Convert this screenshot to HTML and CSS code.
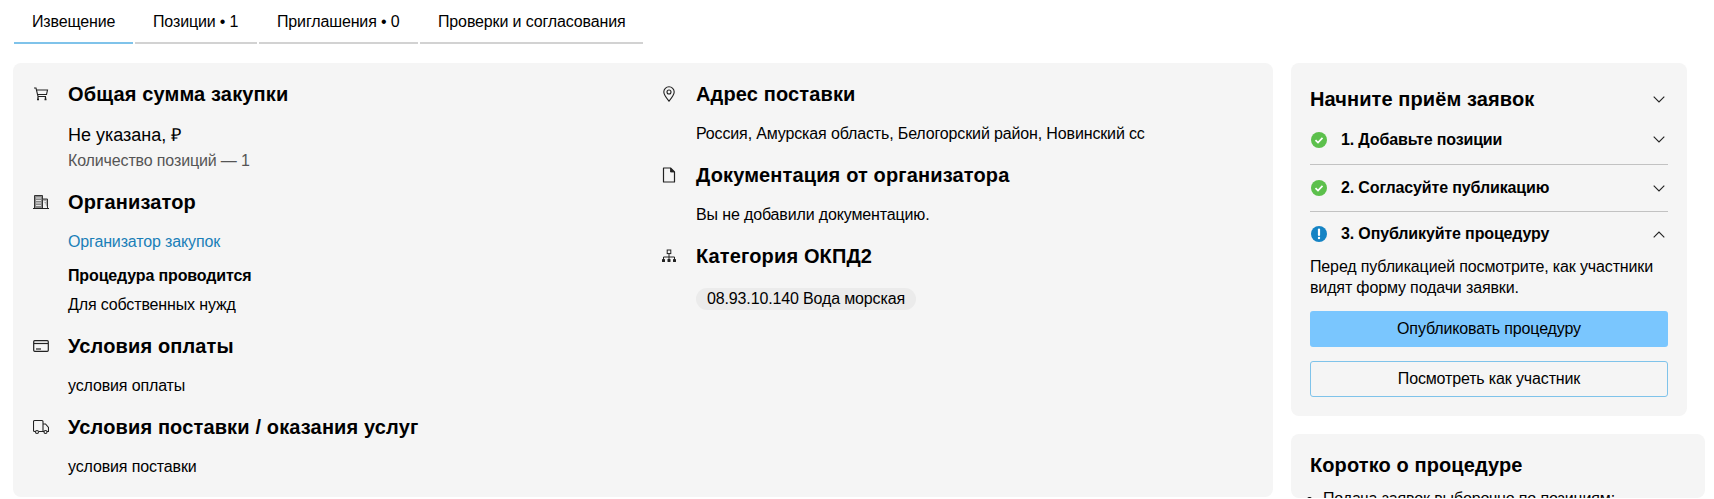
FILE: index.html
```html
<!DOCTYPE html>
<html lang="ru">
<head>
<meta charset="utf-8">
<title>Извещение</title>
<link rel="stylesheet" href="styles.css">
</head>
<body>
<nav class="tabs">
  <a class="tab tab-active tab-1">Извещение</a>
  <a class="tab tab-2">Позиции • 1</a>
  <a class="tab tab-3">Приглашения • 0</a>
  <a class="tab tab-4">Проверки и согласования</a>
</nav>
<div class="layout">
  <main class="card details">
    <div class="col">
      <section class="sec">
        <h2 class="sec-title"><svg class="ico" viewBox="0 0 16 16"><path d="M1 2h2l2 8.500h8M4 4h10.500l-1 4.500H4.800" fill="none" stroke="#222" stroke-width="1.100"/><path d="M5 11v2M12.500 11v2" stroke="#222" stroke-width="1.300"/><path d="M4 13.500h2M11.500 13.500h2" stroke="#222" stroke-width="1.400"/></svg>Общая сумма закупки</h2>
        <p class="big">Не указана, ₽</p>
        <p class="muted">Количество позиций — 1</p>
      </section>
      <section class="sec">
        <h2 class="sec-title"><svg class="ico" viewBox="0 0 16 16"><path d="M0 14.500h16" stroke="#222"/><path d="M1.500 14V1.500h8V14" fill="#888" stroke="#333"/><path d="M9.500 5h5v9" fill="#aaa" stroke="#333"/><path d="M3 4h5M3 6.500h5M3 9h5M3 11.500h5M11 7.500h2M11 10h2M11 12h2" stroke="#eee" stroke-width=".9"/></svg>Организатор</h2>
        <p class="text"><a class="link">Организатор закупок</a></p>
        <p class="strong">Процедура проводится</p>
        <p class="text text-tight">Для собственных нужд</p>
      </section>
      <section class="sec">
        <h2 class="sec-title"><svg class="ico" viewBox="0 0 16 16"><rect x=".7" y="2.700" width="14.600" height="10.600" rx="1" fill="none" stroke="#222" stroke-width="1.200"/><path d="M1 5.500h14" stroke="#222" stroke-width="1.200"/><path d="M3 11h5" stroke="#222" stroke-width="1.200"/></svg>Условия оплаты</h2>
        <p class="text">условия оплаты</p>
      </section>
      <section class="sec">
        <h2 class="sec-title"><svg class="ico" viewBox="0 0 16 16"><path d="M2.500 12.500H1.500a1 1 0 0 1-1-1V2.500a1 1 0 0 1 1-1h7.500a1 1 0 0 1 1 1v10h-4M10 5h2.500l3 3.500v4h-1.500M10 12.500h1" fill="none" stroke="#222" stroke-width="1.100"/><circle cx="4" cy="13" r="1.500" fill="none" stroke="#222" stroke-width="1.100"/><circle cx="12.500" cy="13" r="1.500" fill="none" stroke="#222" stroke-width="1.100"/></svg>Условия поставки / оказания услуг</h2>
        <p class="text">условия поставки</p>
      </section>
    </div>
    <div class="col">
      <section class="sec">
        <h2 class="sec-title"><svg class="ico" viewBox="0 0 16 16"><path d="M8 15.200C5 11.500 2.800 8.800 2.800 6a5.200 5.200 0 0 1 10.400 0c0 2.800-2.200 5.500-5.200 9.200z" fill="none" stroke="#222" stroke-width="1.100"/><circle cx="8" cy="6" r="2" fill="none" stroke="#222" stroke-width="1.100"/></svg>Адрес поставки</h2>
        <p class="text">Россия, Амурская область, Белогорский район, Новинский сс</p>
      </section>
      <section class="sec">
        <h2 class="sec-title"><svg class="ico" viewBox="0 0 16 16"><path d="M2.500 1h7l4 4v10h-11z" fill="none" stroke="#222" stroke-width="1.200" stroke-linejoin="round"/><path d="M9.500 1v4h4" fill="#222" stroke="#222" stroke-width=".8"/></svg>Документация от организатора</h2>
        <p class="text">Вы не добавили документацию.</p>
      </section>
      <section class="sec">
        <h2 class="sec-title"><svg class="ico" viewBox="0 0 16 16"><rect x="6.200" y="2" width="3.600" height="3.600" fill="none" stroke="#222"/><path d="M8 5.500V9M2.500 11V9h11v2M8 9v2" fill="none" stroke="#222"/><rect x="1" y="11" width="3" height="3" rx=".6" fill="#222"/><rect x="6.500" y="11" width="3" height="3" rx=".6" fill="#222"/><rect x="12" y="11" width="3" height="3" rx=".6" fill="#222"/></svg>Категория ОКПД2</h2>
        <p class="chip-row"><span class="chip">08.93.10.140 Вода морская</span></p>
      </section>
    </div>
  </main>
  <aside class="side">
    <div class="card panel">
      <div class="panel-head">
        <h2 class="panel-title">Начните приём заявок</h2>
        <svg class="chev" viewBox="0 0 12 7"><path d="M.7.7 6 6l5.300-5.300" fill="none" stroke="#222" stroke-width="1.100"/></svg>
      </div>
      <div class="step step-first">
        <svg class="st-ico" viewBox="0 0 16 16"><circle cx="8" cy="8" r="8" fill="#5cc04c"/><path d="M4.500 8.200 7 10.600l4.500-4.800" fill="none" stroke="#fff" stroke-width="1.700"/></svg>
        <span class="step-name">1. Добавьте позиции</span>
        <svg class="chev" viewBox="0 0 12 7"><path d="M.7.7 6 6l5.300-5.300" fill="none" stroke="#222" stroke-width="1.100"/></svg>
      </div>
      <div class="step">
        <svg class="st-ico" viewBox="0 0 16 16"><circle cx="8" cy="8" r="8" fill="#5cc04c"/><path d="M4.500 8.200 7 10.600l4.500-4.800" fill="none" stroke="#fff" stroke-width="1.700"/></svg>
        <span class="step-name">2. Согласуйте публикацию</span>
        <svg class="chev" viewBox="0 0 12 7"><path d="M.7.7 6 6l5.300-5.300" fill="none" stroke="#222" stroke-width="1.100"/></svg>
      </div>
      <div class="step step-open">
        <svg class="st-ico" viewBox="0 0 16 16"><circle cx="8" cy="8" r="8" fill="#1583c4"/><path d="M8 3.500v5.500" stroke="#fff" stroke-width="2.200" stroke-linecap="round"/><circle cx="8" cy="12" r="1.200" fill="#fff"/></svg>
        <span class="step-name">3. Опубликуйте процедуру</span>
        <svg class="chev" viewBox="0 0 12 7"><path d="M.7 6.300 6 1l5.300 5.300" fill="none" stroke="#222" stroke-width="1.100"/></svg>
      </div>
      <p class="step-text">Перед публикацией посмотрите, как участники видят форму подачи заявки.</p>
      <button class="btn btn-primary">Опубликовать процедуру</button>
      <button class="btn btn-outline">Посмотреть как участник</button>
    </div>
    <div class="card summary">
      <h2 class="panel-title">Коротко о процедуре</h2>
      <ul class="summary-list"><li>Подача заявок выборочно по позициям:</li></ul>
    </div>
  </aside>
</div>
</body>
</html>
```
FILE: styles.css
```css
* { box-sizing: border-box; }
html { overflow: hidden; }
body {
  margin: 0;
  height: 499px;
  overflow: hidden;
  background: #fff;
  color: #000;
  font-family: "Liberation Sans", Arial, sans-serif;
  font-size: 16px;
  line-height: 24px;
  letter-spacing: -0.14px;
}
h2, p, ul { margin: 0; padding: 0; }

.tabs { display: flex; gap: 2px; height: 44px; margin-left: 14px; }
.tab {
  display: block;
  height: 44px;
  padding: 10px 0 0 18px;
  border-bottom: 2px solid #d2d2d2;
}
.tab-active { border-bottom-color: #7fc3ea; }
.tab-1 { width: 119px; }
.tab-2 { width: 122px; }
.tab-3 { width: 159px; }
.tab-4 { width: 223px; }

.layout { display: flex; align-items: flex-start; gap: 18px; margin: 19px 0 0 13px; }
.card { background: #f5f5f5; border-radius: 8px; }
.details {
  width: 1260px;
  height: 434px;
  padding: 2px 20px 0;
  display: grid;
  grid-template-columns: 589px 589px;
  column-gap: 39px;
}
.col { display: block; }
.sec { padding-top: 17px; }
.sec-title {
  display: flex;
  align-items: center;
  gap: 19px;
  height: 24px;
  font-size: 20px;
  font-weight: 700;
  line-height: 24px;
  letter-spacing: 0.14px;
}
.ico { width: 16px; height: 16px; flex: none; }
.big, .muted, .text, .strong, .chip-row { margin-left: 35px; }
.big { margin-top: 16px; font-size: 18px; line-height: 26px; letter-spacing: 0; }
.muted { margin-top: 1px; color: #555; }
.text { margin-top: 16px; }
.text-tight { margin-top: 5px; }
.strong { margin-top: 10px; font-weight: 700; }
.link { color: #1a7fb8; }
.chip-row { margin-top: 19px; }
.chip {
  display: inline-block;
  height: 22px;
  padding: 0 11px;
  border-radius: 11px;
  background: #ebebeb;
  line-height: 22px;
}

.side { display: flex; flex-direction: column; gap: 18px; width: 396px; height: 436px; }
.panel { flex: none; padding: 19px; }
.panel-head { display: flex; justify-content: space-between; align-items: center; height: 34px; }
.panel-title { font-size: 20px; font-weight: 700; line-height: 24px; letter-spacing: 0.1px; }
.chev { width: 12px; height: 7px; flex: none; margin-right: 3px; }
.step {
  display: flex;
  align-items: center;
  height: 47px;
  border-top: 1px solid #c2c2c2;
}
.step-first { border-top: 0; height: 48px; padding-bottom: 1px; }
.step-open { height: 45px; }
.step-name { flex: 1; margin-left: 14px; font-weight: 700; }
.st-ico { width: 16px; height: 16px; flex: none; margin-left: 1px; }
.step-text { line-height: 21px; }
.btn {
  display: block;
  width: 100%;
  height: 36px;
  border-radius: 3px;
  font: inherit;
  letter-spacing: inherit;
  color: #000;
  padding: 0;
}
.btn-primary { margin-top: 13px; background: #7ac6fe; border: 0; }
.btn-outline { margin-top: 14px; background: transparent; border: 1px solid #7fc3ea; }
.summary { flex: none; width: 414px; height: 64px; padding: 19px; overflow: hidden; }
.summary-list { margin-top: 10px; padding-left: 13px; list-style: disc; }
```
